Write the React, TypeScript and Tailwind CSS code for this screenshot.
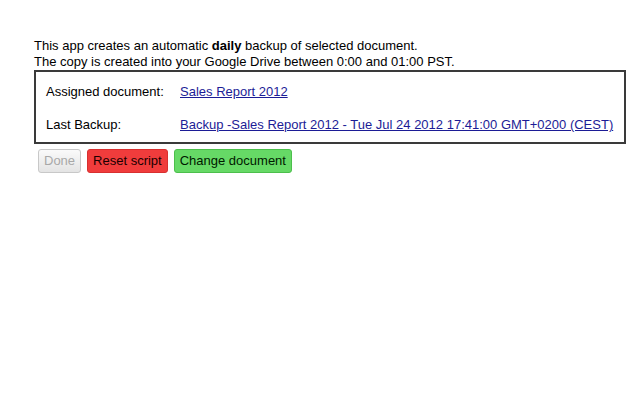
export default function App() {
  return (
    <div className="min-h-[400px] bg-white pl-[34px] pt-[38px] text-[13px] leading-[16px] text-black" style={{ fontFamily: '"Liberation Sans", Arial, sans-serif' }}>
      <p>
        This app creates an automatic <b>daily</b> backup of selected document.
      </p>
      <p>The copy is created into your Google Drive between 0:00 and 01:00 PST.</p>

      <div className="flex w-[592px] flex-col gap-[17px] border-2 border-[#3a3a3a] px-[10px] pb-[9px] pt-[12px]">
        <div className="flex">
          <span className="w-[134px]">Assigned document:</span>
          <a href="#" className="text-[#1c1c96] underline">Sales Report 2012</a>
        </div>
        <div className="flex">
          <span className="w-[134px]">Last Backup:</span>
          <a href="#" className="text-[#1c1c96] underline">
            Backup -Sales Report 2012 - Tue Jul 24 2012 17:41:00 GMT+0200 (CEST)
          </a>
        </div>
      </div>

      <div className="ml-[4px] mt-[5px] flex gap-[6px]">
        <button className="h-[24px] rounded-[3px] border border-[#c8c8c8] bg-gradient-to-b from-[#fafafa] to-[#e4e4e4] px-[5px] text-[#a8a8a8]">
          Done
        </button>
        <button className="h-[24px] rounded-[3px] border border-[#d83030] bg-[#f03c3c] px-[5px] text-[#1a0000]">
          Reset script
        </button>
        <button className="h-[24px] rounded-[3px] border border-[#4cbf4c] bg-[#66d966] px-[5px] text-[#001a00]">
          Change document
        </button>
      </div>
    </div>
  );
}
